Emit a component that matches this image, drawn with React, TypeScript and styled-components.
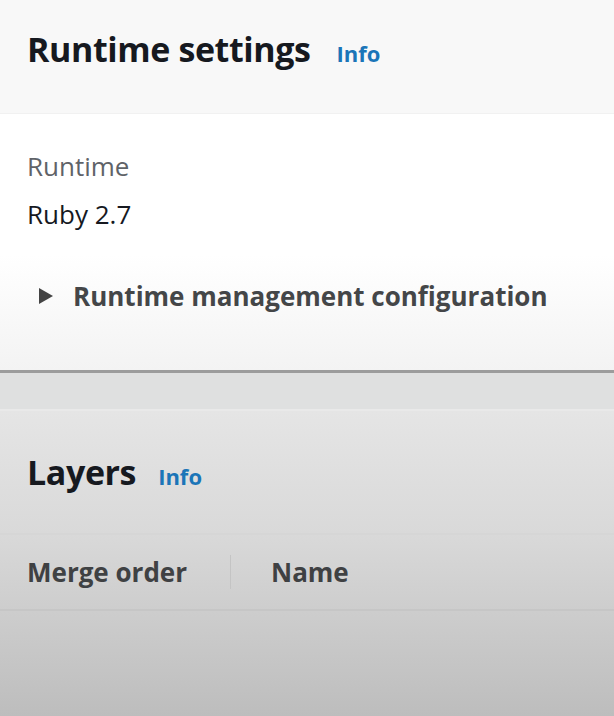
import React from "react";
import styled, { createGlobalStyle } from "styled-components";

const Global = createGlobalStyle`
  html, body { margin: 0; padding: 0; }
  body {
    width: 614px;
    height: 716px;
    overflow: hidden;
    font-family: "Open Sans", "Noto Sans", sans-serif;
    background: #bdbdbd;
  }
`;

const Page = styled.div`
  display: flex;
  flex-direction: column;
  width: 614px;
  height: 716px;
`;

const Card = styled.section`
  display: flex;
  flex-direction: column;
`;

const CardHeader = styled.header<{ $height: number; $bg: string; $gap: number }>`
  display: flex;
  align-items: baseline;
  gap: ${(p) => p.$gap}px;
  height: ${(p) => p.$height}px;
  box-sizing: border-box;
  padding: 0 27px;
  background: ${(p) => p.$bg};
`;

const Title = styled.h2<{ $top: number }>`
  margin: 0;
  padding-top: ${(p) => p.$top}px;
  font-size: 34px;
  font-weight: 700;
  letter-spacing: -0.4px;
  color: #16191f;
  line-height: 1;
`;

const InfoLink = styled.a`
  font-size: 22px;
  font-weight: 700;
  color: #1b75b8;
  text-decoration: none;
  line-height: 1;
`;

const Body = styled.div`
  display: flex;
  flex-direction: column;
  padding: 36px 27px 0;
  height: 257px;
  box-sizing: border-box;
  border-top: 1px solid #f1f1f1;
  background: linear-gradient(to bottom, #ffffff 0%, #ffffff 55%, #f3f3f3 100%);
`;

const Label = styled.div`
  font-size: 26px;
  color: #5f6368;
  line-height: 32px;
`;

const Value = styled.div`
  font-size: 26px;
  color: #16191f;
  line-height: 32px;
  margin-top: 16px;
`;

const ExpandRow = styled.div`
  display: flex;
  align-items: center;
  gap: 19px;
  margin-top: 50px;
  padding-left: 11px;
  font-size: 26px;
  font-weight: 700;
  color: #444648;
  line-height: 32px;
`;

const Caret = styled.svg`
  width: 16px;
  height: 18px;
  flex: none;
`;

const Gutter = styled.div`
  height: 36px;
  border-top: 3px solid #9c9c9c;
  border-bottom: 2px solid #e9e9e9;
  background: #dfe0e0;
`;

const LowerCard = styled(Card)`
  flex: 1;
  background: linear-gradient(to bottom, #e5e5e5 0%, #d9d9d9 40%, #bdbdbd 100%);
`;

const TableHead = styled.div`
  display: flex;
  align-items: center;
  height: 78px;
  box-sizing: border-box;
  border-top: 2px solid #d6d6d6;
  border-bottom: 2px solid #c6c6c6;
`;

const HeadCell = styled.div<{ $width?: number; $divider?: boolean }>`
  display: flex;
  align-items: center;
  height: 34px;
  box-sizing: border-box;
  padding-left: ${(p) => (p.$divider ? 40 : 27)}px;
  width: ${(p) => (p.$width ? `${p.$width}px` : "auto")};
  border-left: ${(p) => (p.$divider ? "1px solid #c4c4c4" : "none")};
  font-size: 26px;
  font-weight: 700;
  color: #3f4143;
`;

export default function App() {
  return (
    <Page>
      <Global />
      <Card>
        <CardHeader $height={113} $bg="#f8f8f8" $gap={26}>
          <Title $top={32}>Runtime settings</Title>
          <InfoLink href="#">Info</InfoLink>
        </CardHeader>
        <Body>
          <Label>Runtime</Label>
          <Value>Ruby 2.7</Value>
          <ExpandRow>
            <Caret viewBox="0 0 16 18">
              <path d="M1 1 L15 9 L1 17 Z" fill="#444" />
            </Caret>
            Runtime management configuration
          </ExpandRow>
        </Body>
      </Card>
      <Gutter />
      <LowerCard>
        <CardHeader $height={122} $bg="transparent" $gap={22}>
          <Title $top={44}>Layers</Title>
          <InfoLink href="#">Info</InfoLink>
        </CardHeader>
        <TableHead>
          <HeadCell $width={230}>Merge order</HeadCell>
          <HeadCell $divider>Name</HeadCell>
        </TableHead>
      </LowerCard>
    </Page>
  );
}
